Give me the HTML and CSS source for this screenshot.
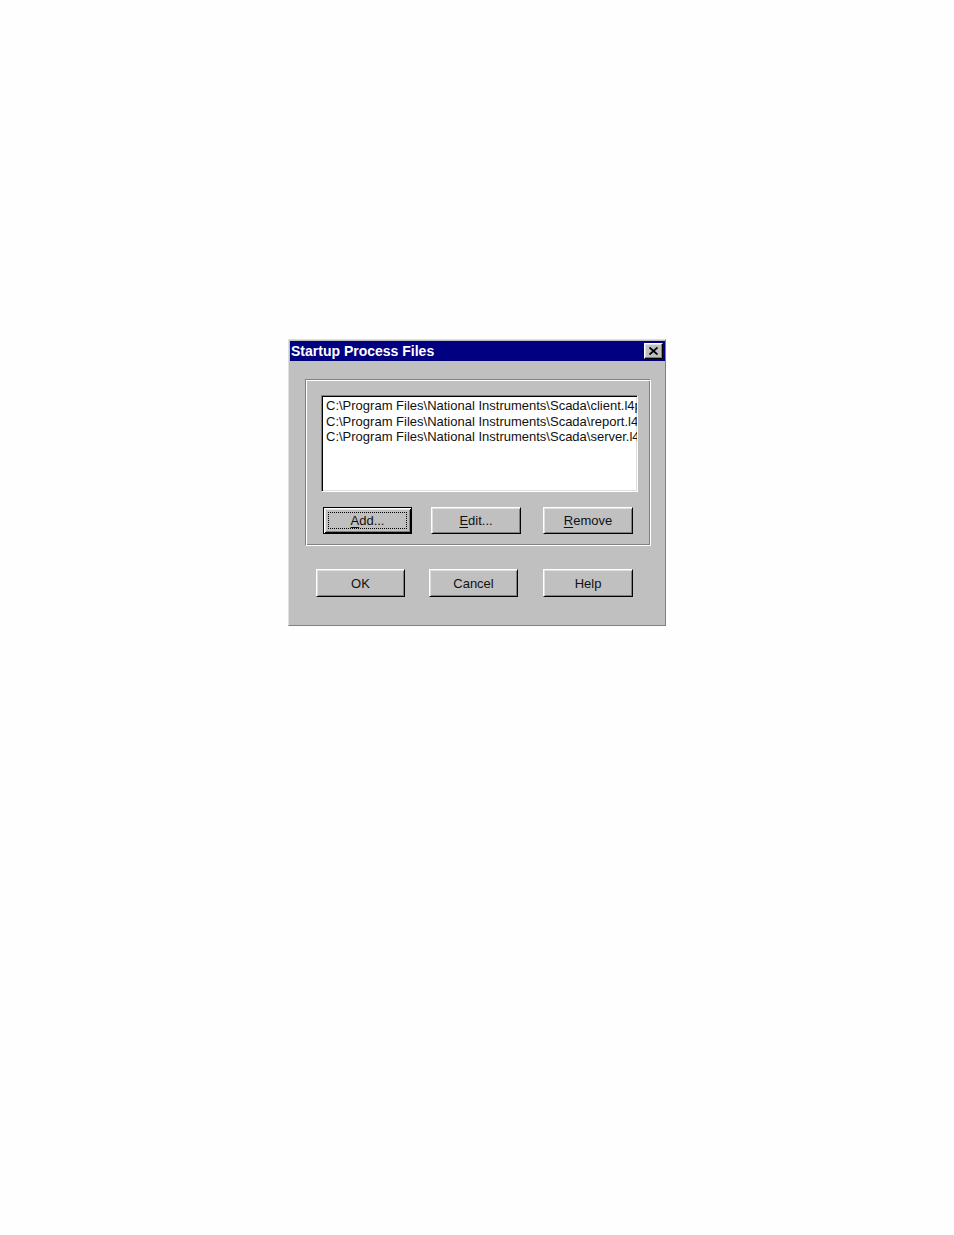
FILE: index.html
```html
<!DOCTYPE html>
<html>
<head>
<meta charset="utf-8">
<link rel="stylesheet" href="styles.css">
</head>
<body>
<div class="page">
  <div class="dialog">
    <div class="titlebar">
      <span class="title">Startup Process Files</span>
      <span class="close">
        <svg width="9" height="8" viewBox="0 0 9 8"><path d="M0.5 0.5 L8.5 7.5 M8.5 0.5 L0.5 7.5" stroke="#000" stroke-width="1.8" fill="none"/></svg>
      </span>
    </div>
    <div class="content">
      <div class="group">
        <div class="listbox">
          <div class="item">C:\Program Files\National Instruments\Scada\client.l4p</div>
          <div class="item">C:\Program Files\National Instruments\Scada\report.l4p</div>
          <div class="item">C:\Program Files\National Instruments\Scada\server.l4p</div>
        </div>
        <div class="row row-group">
          <button class="btn btn-default btn-add"><span class="focus"><u>A</u>dd...</span></button>
          <button class="btn btn-edit"><u>E</u>dit...</button>
          <button class="btn btn-remove"><u>R</u>emove</button>
        </div>
      </div>
      <div class="row row-main">
        <button class="btn btn-ok">OK</button>
        <button class="btn btn-cancel">Cancel</button>
        <button class="btn btn-help">Help</button>
      </div>
    </div>
  </div>
</div>
</body>
</html>
```
FILE: styles.css
```css
html, body {
  margin: 0;
  padding: 0;
  background: #fefefe;
}
.page {
  padding: 339px 0 0 288px;
}
.dialog {
  box-sizing: border-box;
  width: 378px;
  height: 287px;
  background: #c0c0c0;
  border: 1px solid;
  border-color: #dfdfdf #808080 #808080 #dfdfdf;
  padding: 1px 0 1px 1px;
  font-family: "Liberation Sans", Arial, sans-serif;
}
.titlebar {
  height: 20px;
  background: #000080;
  display: flex;
  align-items: center;
  justify-content: space-between;
  padding: 0 2px 0 1px;
}
.title {
  color: #fff;
  font-weight: bold;
  font-size: 14px;
  margin-top: -1px;
}
.close {
  box-sizing: border-box;
  width: 19px;
  height: 16px;
  background: #c0c0c0;
  border: 1px solid;
  border-color: #fff #000 #000 #fff;
  box-shadow: inset -1px -1px #808080, inset 1px 1px #dfdfdf;
  display: flex;
  align-items: center;
  justify-content: center;
}
.content {
  padding: 18px 0 0 15px;
}
.group {
  box-sizing: border-box;
  width: 346px;
  height: 167px;
  border: 1px solid;
  border-color: #808080 #fff #fff #808080;
  box-shadow: inset 1px 1px #fff, inset -1px -1px #808080;
  padding: 15px 0 0 15px;
}
.listbox {
  box-sizing: border-box;
  width: 317px;
  height: 97px;
  background: #fff;
  border: 1px solid;
  border-color: #808080 #fff #fff #808080;
  box-shadow: inset 1px 1px #000, inset -1px -1px #dfdfdf;
  padding: 2px 0 0 4px;
  overflow: hidden;
}
.item {
  font-size: 13px;
  line-height: 15.5px;
  color: #111;
  white-space: nowrap;
  overflow: hidden;
}
.row {
  display: flex;
}
.row-group {
  margin-top: 15px;
  padding-left: 2px;
}
.row-main {
  margin-top: 23px;
  padding-left: 11px;
}
.btn {
  box-sizing: border-box;
  height: 27px;
  width: 90px;
  margin: 0;
  padding: 0;
  background: #c0c0c0;
  border: 1px solid;
  border-color: #fff #000 #000 #fff;
  box-shadow: inset 1px 1px #dfdfdf, inset -1px -1px #808080;
  font-family: "Liberation Sans", Arial, sans-serif;
  font-size: 13px;
  color: #111;
  display: flex;
  align-items: center;
  justify-content: center;
}
.row-main .btn {
  height: 28px;
}
.btn u {
  text-decoration: underline;
  text-underline-offset: 2px;
}
.btn-default {
  width: 89px;
  border: 1px solid #000;
  box-shadow: inset 1px 1px #fff, inset -1px -1px #000, inset 2px 2px #dfdfdf, inset -2px -2px #808080;
  padding: 4px;
}
.focus {
  flex: 1;
  align-self: stretch;
  display: flex;
  align-items: center;
  justify-content: center;
  border: 1px dotted #000;
}
.btn-edit { margin-left: 19px; }
.btn-remove { margin-left: 22px; }
.btn-ok { width: 89px; }
.btn-cancel { width: 89px; margin-left: 24px; }
.btn-help { margin-left: 25px; }
```
